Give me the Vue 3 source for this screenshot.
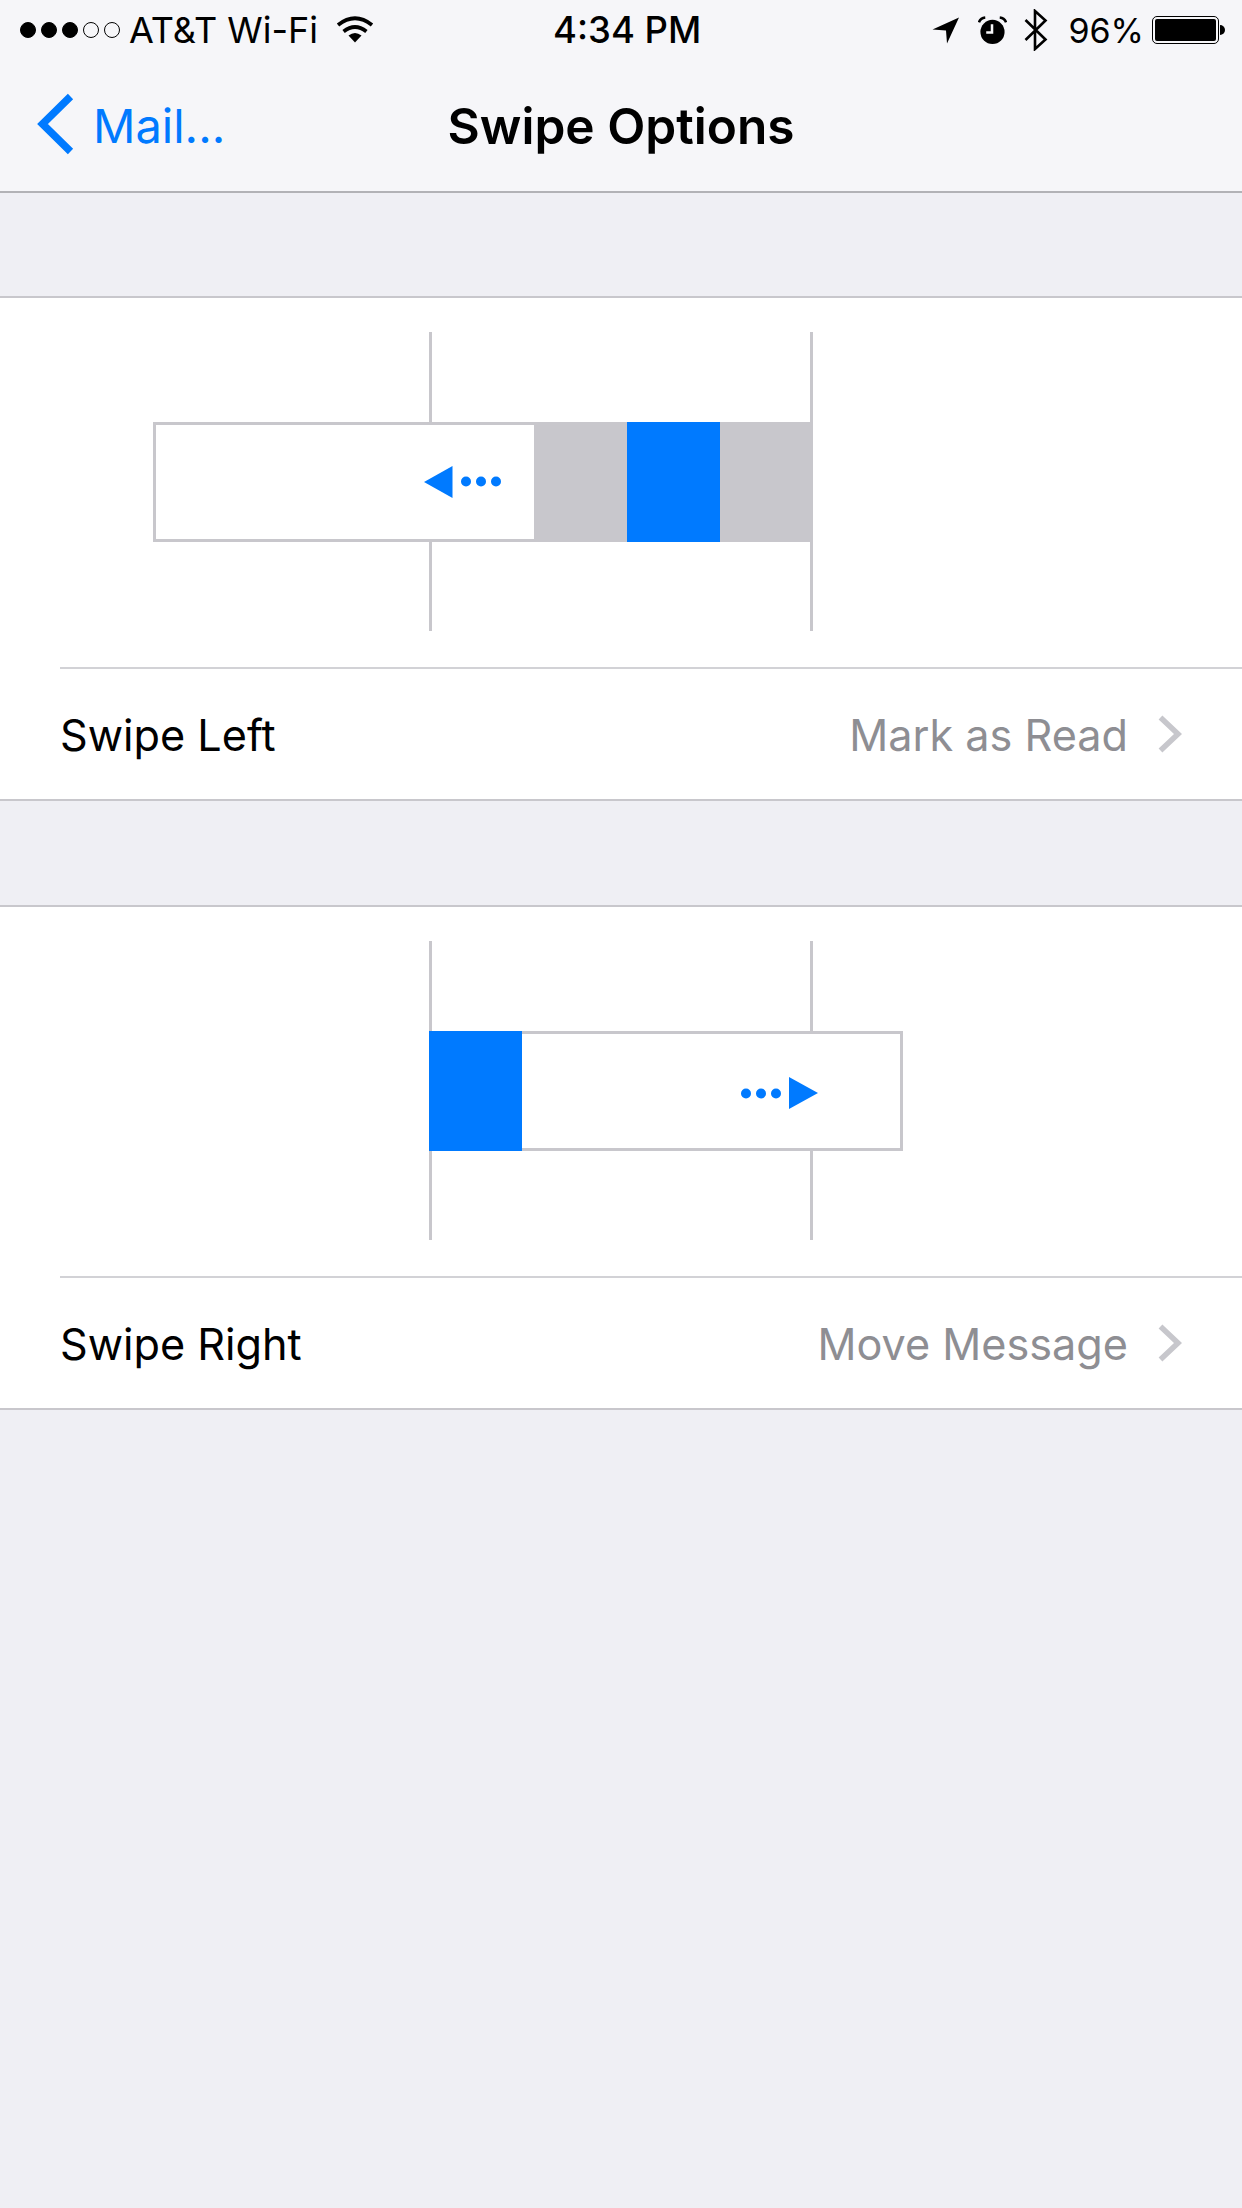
<template>
  <div class="page">
    <header class="top">
      <div class="status">
        <div class="carrier">
          <div class="signal">
            <span v-for="n in 3" :key="'on' + n" class="dot on"></span>
            <span v-for="n in 2" :key="'off' + n" class="dot"></span>
          </div>
          <span class="carrier-name">AT&amp;T Wi-Fi</span>
          <svg class="wifi" width="38" height="28" viewBox="0 0 38 28">
            <path d="M19 27.5 L12.5 20.5 Q19 15.5 25.5 20.5 Z" fill="#000" />
            <path d="M7.6 16.5 Q19 7.5 30.4 16.5" fill="none" stroke="#000" stroke-width="3.8" />
            <path d="M2 10 Q19 -3.5 36 10" fill="none" stroke="#000" stroke-width="3.8" />
          </svg>
        </div>
        <div class="time">4:34 PM</div>
        <div class="status-right">
          <svg width="28" height="27" viewBox="0 0 28 27">
            <path d="M27 0.5 L0.5 12.5 L14 13.5 L15 26.5 Z" fill="#000" />
          </svg>
          <svg class="alarm" width="29" height="29" viewBox="0 0 30 30">
            <circle cx="15" cy="16.5" r="12.5" fill="#000" />
            <path d="M14.5 8.5 V17 H8.5" fill="none" stroke="#f7f7f9" stroke-width="2.6" />
            <path d="M1 6.5 Q2.5 2 7.5 1.5 M29 6.5 Q27.5 2 22.5 1.5" fill="none" stroke="#000" stroke-width="2.6" />
          </svg>
          <svg class="bt" width="24" height="42" viewBox="0 0 24 42">
            <path d="M1.5 11 L21.5 30.5 L11 40 V2 L21.5 11.5 L1.5 31" fill="none" stroke="#000" stroke-width="2.6" />
          </svg>
          <span class="percent">96%</span>
          <div class="battery">
            <div class="battery-body"><div class="battery-fill"></div></div>
            <div class="battery-nub"></div>
          </div>
        </div>
      </div>
      <nav class="nav">
        <div class="back">
          <svg width="44" height="70" viewBox="0 0 44 70">
            <path d="M34.5 6.5 L6.5 34 L34.5 61.5" fill="none" stroke="#007aff" stroke-width="7.5" />
          </svg>
          <span class="back-label">Mail...</span>
        </div>
        <h1 class="title">Swipe Options</h1>
      </nav>
    </header>

    <section class="section">
      <div class="diagram">
        <span class="guide guide-a"></span>
        <span class="guide guide-b"></span>
        <div class="bar bar-left">
          <div class="message">
            <svg width="78" height="32" viewBox="0 0 78 32">
              <path d="M0 16 L28.5 0 V32 Z" fill="#007aff" />
              <circle cx="42" cy="15.5" r="5" fill="#007aff" />
              <circle cx="57" cy="15.5" r="5" fill="#007aff" />
              <circle cx="72" cy="15.5" r="5" fill="#007aff" />
            </svg>
          </div>
          <div class="action gray"></div>
          <div class="action blue"></div>
          <div class="action gray last"></div>
        </div>
      </div>
      <div class="row">
        <span class="row-label">Swipe Left</span>
        <span class="row-value">Mark as Read</span>
        <svg class="chevron" width="24" height="38" viewBox="0 0 24 38">
          <path d="M2.5 2.5 L20 19 L2.5 35.5" fill="none" stroke="#c7c7cc" stroke-width="5.5" />
        </svg>
      </div>
    </section>

    <section class="section">
      <div class="diagram">
        <span class="guide guide-a"></span>
        <span class="guide guide-b"></span>
        <div class="bar bar-right">
          <div class="action blue"></div>
          <div class="message">
            <svg width="78" height="32" viewBox="0 0 78 32">
              <circle cx="5" cy="16.5" r="5" fill="#007aff" />
              <circle cx="20" cy="16.5" r="5" fill="#007aff" />
              <circle cx="35" cy="16.5" r="5" fill="#007aff" />
              <path d="M48 0 L77 16 L48 32 Z" fill="#007aff" />
            </svg>
          </div>
        </div>
      </div>
      <div class="row">
        <span class="row-label">Swipe Right</span>
        <span class="row-value">Move Message</span>
        <svg class="chevron" width="24" height="38" viewBox="0 0 24 38">
          <path d="M2.5 2.5 L20 19 L2.5 35.5" fill="none" stroke="#c7c7cc" stroke-width="5.5" />
        </svg>
      </div>
    </section>
  </div>
</template>

<script setup>
</script>

<style>
html,
body {
  background: #efeff4;
}
</style>

<style scoped>
.page {
  width: 1242px;
  height: 2208px;
  overflow: hidden;
  background: #efeff4;
  font-family: Inter, "Liberation Sans", sans-serif;
  color: #000;
}
.top {
  background: #f6f6f9;
  border-bottom: 2px solid #b2b2b6;
  height: 193px;
  box-sizing: border-box;
}
.status {
  display: grid;
  grid-template-columns: 553px auto 1fr;
  align-items: center;
  height: 60px;
}
.carrier {
  display: flex;
  align-items: center;
  padding-left: 20px;
}
.signal {
  display: flex;
  gap: 5px;
}
.dot {
  width: 16px;
  height: 16px;
  box-sizing: border-box;
  border-radius: 50%;
  border: 1.5px solid #000;
}
.dot.on {
  background: #000;
}
.carrier-name {
  margin-left: 9px;
  font-size: 36px;
}
.wifi {
  margin-left: 18px;
  margin-top: -2px;
}
.time {
  font-size: 36.5px;
  font-weight: 500;
}
.status-right {
  display: flex;
  align-items: center;
  justify-content: flex-end;
  padding-right: 17px;
}
.alarm {
  margin-left: 18px;
}
.bt {
  margin-left: 17px;
}
.percent {
  margin-left: 20px;
  font-size: 34px;
}
.battery {
  display: flex;
  align-items: center;
  margin-left: 8px;
}
.battery-body {
  width: 67px;
  height: 28px;
  box-sizing: border-box;
  border: 1.5px solid #000;
  border-radius: 5px;
  padding: 2px;
}
.battery-fill {
  width: 100%;
  height: 100%;
  background: #000;
  border-radius: 2px;
}
.battery-nub {
  width: 5px;
  height: 10px;
  background: #000;
  border-radius: 0 5px 5px 0;
  margin-left: 1px;
}
.nav {
  position: relative;
  display: flex;
  align-items: center;
  justify-content: center;
  height: 131px;
}
.back {
  position: absolute;
  left: 36px;
  top: 0;
  height: 131px;
  display: flex;
  align-items: center;
  color: #007aff;
}
.back svg {
  margin-top: -1px;
}
.back-label {
  margin-left: 13px;
  font-size: 47px;
}
.title {
  margin: 0;
  font-size: 49.6px;
  font-weight: 600;
}
.section {
  margin-top: 103px;
  background: #fff;
  border-top: 2px solid #c8c7cc;
  border-bottom: 2px solid #c8c7cc;
}
.section + .section {
  margin-top: 104px;
}
.diagram {
  position: relative;
  height: 369px;
  padding-top: 124px;
  box-sizing: border-box;
}
.guide {
  position: absolute;
  top: 34px;
  width: 3px;
  height: 299px;
  background: #c8c7cc;
}
.guide-a {
  left: 429px;
}
.guide-b {
  left: 810px;
}
.bar {
  position: relative;
  display: flex;
  height: 120px;
  background: #fff;
}
.bar-left {
  margin-left: 153px;
  width: 659px;
}
.bar-right {
  margin-left: 429px;
  width: 474px;
}
.message {
  flex: 1;
  display: flex;
  align-items: center;
  justify-content: flex-end;
  box-sizing: border-box;
  border: 3px solid #c8c7cc;
}
.bar-left .message {
  border-right: none;
  padding-right: 32px;
}
.bar-right .message {
  border-left: none;
  padding-right: 81px;
}
.bar-right .message svg {
  margin-top: 3px;
}
.action {
  width: 93px;
}
.action.last {
  width: 92px;
}
.gray {
  background: #c8c7cc;
}
.blue {
  background: #007aff;
}
.row {
  display: flex;
  align-items: center;
  height: 130px;
  margin-left: 60px;
  padding-right: 60px;
  border-top: 2px solid #d2d2d6;
  font-size: 43.2px;
}
.row-label,
.row-value {
  position: relative;
  top: 1px;
}
.row-label {
  flex: 1;
}
.row-value {
  color: #8e8e93;
}
.chevron {
  margin-left: 30px;
}
</style>
